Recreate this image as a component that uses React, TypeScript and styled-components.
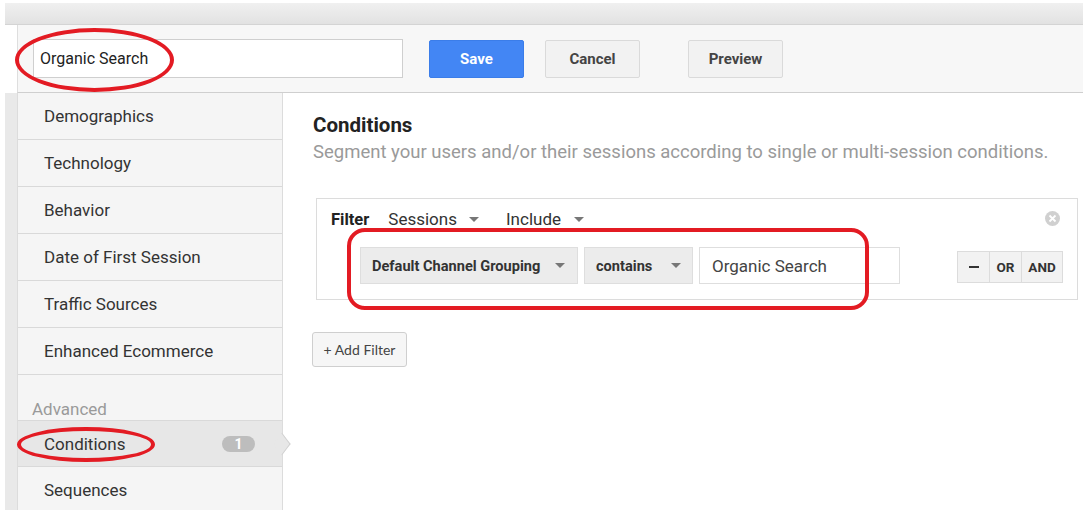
import React from 'react';
import styled, { createGlobalStyle } from 'styled-components';

const GlobalStyle = createGlobalStyle`
  html, body {
    margin: 0;
    padding: 0;
    background: #ffffff;
  }
  body {
    font-family: Roboto, "Liberation Sans", Arial, sans-serif;
    color: #333;
  }
`;

const Page = styled.div`
  position: relative;
  width: 1086px;
  height: 510px;
  overflow: hidden;
  padding: 3px 3px 0 5px;
  box-sizing: border-box;
`;

const TopStrip = styled.div`
  height: 21px;
  background: linear-gradient(180deg, #f0f0f0, #e2e2e2);
  border-bottom: 1px solid #d4d4d4;
`;

const Toolbar = styled.div`
  display: flex;
  align-items: center;
  height: 68px;
  margin-left: 12px;
  padding-left: 15px;
  background: #f7f7f7;
  border-left: 1px solid #dedede;
  border-bottom: 1px solid #cfcfcf;
  box-sizing: border-box;
`;

const NameInput = styled.div`
  width: 370px;
  height: 39px;
  box-sizing: border-box;
  background: #fff;
  border: 1px solid #cfcfcf;
  display: flex;
  align-items: center;
  padding-left: 6px;
  font-size: 16px;
  color: #222;
  margin-right: 26px;
`;

const Button = styled.div<{ $primary?: boolean; $gap?: number }>`
  width: 95px;
  height: 38px;
  box-sizing: border-box;
  display: flex;
  align-items: center;
  justify-content: center;
  border-radius: 2px;
  font-size: 15px;
  font-weight: 700;
  margin-right: ${(p) => p.$gap ?? 0}px;
  background: ${(p) => (p.$primary ? '#4386f4' : '#f2f2f2')};
  color: ${(p) => (p.$primary ? '#ffffff' : '#444')};
  border: 1px solid ${(p) => (p.$primary ? '#3b7de9' : '#dadada')};
`;

const Body = styled.div`
  display: flex;
  height: 418px;
`;

const LeftStrip = styled.div`
  width: 12px;
  background: #e9e9e9;
`;

const Sidebar = styled.div`
  width: 266px;
  background: #f5f5f5;
  border-left: 1px solid #dcdcdc;
  border-right: 1px solid #dcdcdc;
  box-sizing: border-box;
  display: flex;
  flex-direction: column;
`;

const NavItem = styled.div<{ $active?: boolean }>`
  position: relative;
  height: 47px;
  flex: 0 0 47px;
  box-sizing: border-box;
  display: flex;
  align-items: center;
  justify-content: space-between;
  padding: 0 26px 0 26px;
  font-size: 17px;
  color: #333;
  border-bottom: 1px solid #d9d9d9;
  background: ${(p) => (p.$active ? '#e7e7e7' : '#f5f5f5')};
  ${(p) => (p.$active ? 'border-top: 1px solid #d9d9d9;' : '')}
`;

const SectionLabel = styled.div`
  height: 45px;
  flex: 0 0 45px;
  box-sizing: border-box;
  display: flex;
  align-items: flex-end;
  padding: 0 0 1px 14px;
  font-size: 17px;
  color: #9a9a9a;
`;

const Badge = styled.span`
  min-width: 33px;
  height: 16px;
  border-radius: 8px;
  background: #bdbdbd;
  color: #fff;
  font-size: 14px;
  font-weight: 700;
  display: flex;
  align-items: center;
  justify-content: center;
  margin-right: 1px;
`;

const Pointer = styled.span`
  position: absolute;
  right: -8px;
  top: 50%;
  width: 15px;
  height: 15px;
  background: #e7e7e7;
  border-top: 1px solid #d0d0d0;
  border-right: 1px solid #d0d0d0;
  transform: translateY(-50%) scaleX(0.75) rotate(45deg);
`;

const Main = styled.div`
  flex: 1;
  padding: 20px 5px 0 30px;
  background: #fff;
`;

const Heading = styled.div`
  font-size: 20.5px;
  font-weight: 700;
  color: #222;
  line-height: 24px;
`;

const Subtitle = styled.div`
  font-size: 18.5px;
  color: #9a9a9a;
  line-height: 22px;
  margin-top: 4px;
`;

const FilterBox = styled.div`
  margin: 35px 0 0 3px;
  width: 762px;
  height: 102px;
  box-sizing: border-box;
  border: 1px solid #dcdcdc;
  padding: 9px 14px 0 14px;
  position: relative;
`;

const FilterHead = styled.div`
  display: flex;
  align-items: center;
  height: 22px;
  font-size: 17px;
`;

const FilterLabel = styled.span`
  font-weight: 700;
  font-size: 16.5px;
  color: #222;
  margin-right: 19px;
`;

const Picker = styled.span<{ $gap: number }>`
  display: inline-flex;
  align-items: center;
  color: #333;
  margin-right: ${(p) => p.$gap}px;
`;

const Caret = styled.span<{ $ml: number }>`
  width: 0;
  height: 0;
  border-left: 5px solid transparent;
  border-right: 5px solid transparent;
  border-top: 5px solid #777;
  margin-left: ${(p) => p.$ml}px;
`;

const CloseIcon = styled.span`
  position: absolute;
  right: 17px;
  top: 12px;
  width: 15px;
  height: 15px;
  border-radius: 50%;
  background: #d0d0d0;
  display: flex;
  align-items: center;
  justify-content: center;
`;

const ConditionRow = styled.div`
  display: flex;
  align-items: center;
  margin: 17px 0 0 29px;
`;

const Dropdown = styled.div<{ $w: number; $pad: number }>`
  width: ${(p) => p.$w}px;
  height: 37px;
  box-sizing: border-box;
  background: #ececec;
  border: 1px solid #dedede;
  display: flex;
  align-items: center;
  justify-content: space-between;
  padding: 0 ${(p) => p.$pad}px 0 11px;
  font-size: 14.6px;
  font-weight: 700;
  color: #333;
  margin-right: 6px;
`;

const ValueInput = styled.div`
  width: 201px;
  height: 37px;
  box-sizing: border-box;
  background: #fff;
  border: 1px solid #dedede;
  display: flex;
  align-items: center;
  padding-left: 12px;
  font-size: 17px;
  color: #444;
`;

const LogicGroup = styled.div`
  display: flex;
  margin-left: 58px;
  margin-top: 3px;
`;

const LogicButton = styled.div<{ $w: number }>`
  width: ${(p) => p.$w}px;
  height: 32px;
  box-sizing: border-box;
  background: #f2f2f2;
  border: 1px solid #dcdcdc;
  margin-left: -1px;
  display: flex;
  align-items: center;
  justify-content: center;
  font-size: 13.5px;
  font-weight: 700;
  color: #333;
`;

const Dash = styled.span`
  width: 10px;
  height: 2px;
  background: #333;
`;

const AddFilter = styled.div`
  margin: 32px 0 0 -1px;
  width: 95px;
  height: 35px;
  box-sizing: border-box;
  border: 1px solid #cfcfcf;
  border-radius: 3px;
  background: #f6f6f6;
  display: flex;
  align-items: center;
  justify-content: center;
  font-family: Lato, "Open Sans", sans-serif;
  font-size: 14px;
  color: #444;
`;

const Mark = styled.div<{ $x: number; $y: number; $w: number; $h: number; $r: string }>`
  position: absolute;
  left: ${(p) => p.$x}px;
  top: ${(p) => p.$y}px;
  width: ${(p) => p.$w}px;
  height: ${(p) => p.$h}px;
  box-sizing: border-box;
  border: 4px solid #e31b23;
  border-radius: ${(p) => p.$r};
  pointer-events: none;
`;

const navItems = [
  'Demographics',
  'Technology',
  'Behavior',
  'Date of First Session',
  'Traffic Sources',
  'Enhanced Ecommerce',
];

export default function App() {
  return (
    <>
      <GlobalStyle />
      <Page>
        <TopStrip />
        <Toolbar>
          <NameInput>Organic Search</NameInput>
          <Button $primary $gap={21}>Save</Button>
          <Button $gap={48}>Cancel</Button>
          <Button>Preview</Button>
        </Toolbar>
        <Body>
          <LeftStrip />
          <Sidebar>
            {navItems.map((item) => (
              <NavItem key={item}>{item}</NavItem>
            ))}
            <SectionLabel>Advanced</SectionLabel>
            <NavItem $active>
              Conditions
              <Badge>1</Badge>
              <Pointer />
            </NavItem>
            <NavItem>Sequences</NavItem>
          </Sidebar>
          <Main>
            <Heading>Conditions</Heading>
            <Subtitle>
              Segment your users and/or their sessions according to single or multi-session conditions.
            </Subtitle>
            <FilterBox>
              <FilterHead>
                <FilterLabel>Filter</FilterLabel>
                <Picker $gap={27}>
                  Sessions
                  <Caret $ml={12} />
                </Picker>
                <Picker $gap={0}>
                  Include
                  <Caret $ml={13} />
                </Picker>
              </FilterHead>
              <CloseIcon>
                <svg width="9" height="9" viewBox="0 0 9 9">
                  <path d="M1.5 1.5 L7.5 7.5 M7.5 1.5 L1.5 7.5" stroke="#fff" strokeWidth="1.8" />
                </svg>
              </CloseIcon>
              <ConditionRow>
                <Dropdown $w={218} $pad={12}>
                  Default Channel Grouping
                  <Caret $ml={0} />
                </Dropdown>
                <Dropdown $w={109} $pad={11}>
                  contains
                  <Caret $ml={0} />
                </Dropdown>
                <ValueInput>Organic Search</ValueInput>
                <LogicGroup>
                  <LogicButton $w={33}>
                    <Dash />
                  </LogicButton>
                  <LogicButton $w={33}>OR</LogicButton>
                  <LogicButton $w={42}>AND</LogicButton>
                </LogicGroup>
              </ConditionRow>
            </FilterBox>
            <AddFilter>+ Add Filter</AddFilter>
          </Main>
        </Body>
        <Mark $x={15} $y={28} $w={159} $h={64} $r="50%" />
        <Mark $x={17} $y={427} $w={138} $h={35} $r="50%" />
        <Mark $x={347} $y={228} $w={522} $h={82} $r="18px" />
      </Page>
    </>
  );
}
